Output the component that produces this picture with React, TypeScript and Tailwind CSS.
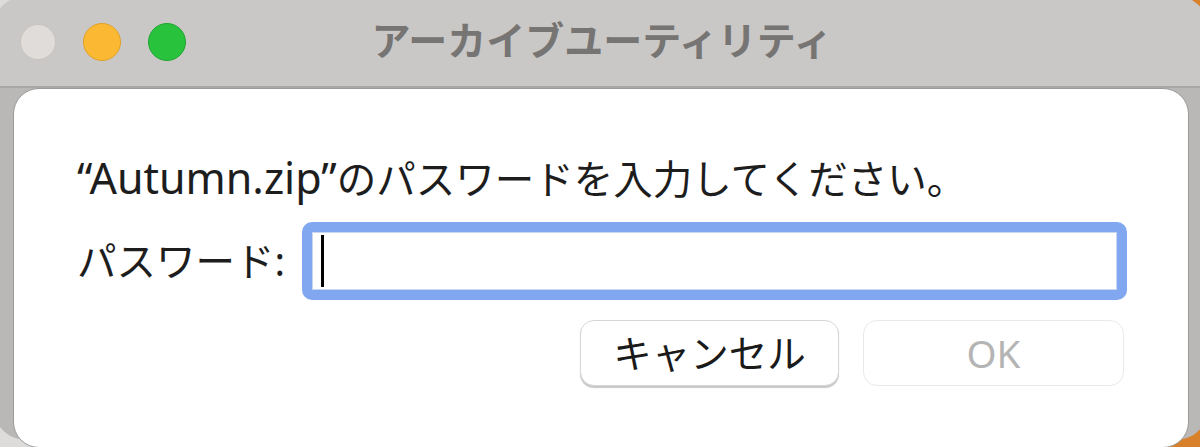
import React from 'react';

const jp = { fontFamily: '"Noto Sans", "Noto Sans CJK JP", sans-serif' };

const TrafficLights: React.FC = () => (
  <div className="flex items-center gap-[27px]">
    <span className="w-[36px] h-[36px] rounded-full bg-[#e0dcd9] border border-[#c9c4c0]" />
    <span className="w-[38px] h-[38px] rounded-full bg-[#fbb933] border border-[#dfa126]" />
    <span className="w-[38px] h-[38px] rounded-full bg-[#28c23d] border border-[#1ea631]" />
  </div>
);

export default function App() {
  return (
    <div
      className="relative w-[1200px] h-[447px] overflow-hidden bg-[linear-gradient(to_right,#dedcda_50%,#d8802a_50%)]"
      style={jp}
    >
      {/* window */}
      <div className="absolute left-[-6px] top-[-4px] w-[1214px] h-[444px] rounded-[32px] bg-[#bab8b6] flex flex-col">
        {/* title bar */}
        <div className="relative h-[92px] shrink-0 rounded-t-[32px] bg-[#cac8c6] border-b-2 border-[#a9a7a5] flex items-center pl-[26px] pt-[2px]">
          <TrafficLights />
          <div className="absolute inset-0 flex items-center justify-center pb-[4px] pl-[2px]">
            <span className="text-[39px] leading-none font-bold text-[#767574]">
              アーカイブユーティリティ
            </span>
          </div>
        </div>

        {/* body */}
        <div className="flex-1 px-[19px]">
          {/* sheet */}
          <div className="h-[360px] rounded-[26px] bg-white border border-[#9d9b99] pl-[63px] pr-[61px] pt-[66px]">
            <p className="text-[39.5px] leading-[46px] text-[#1d1d1d]">
              <span className="text-[43px]">“Autumn.zip”</span>のパスワードを入力してください。
            </p>

            <div className="flex items-center mt-[20px]">
              <span className="w-[225px] shrink-0 text-[39.5px] leading-[46px] text-[#1d1d1d]">パスワード:</span>
              <div className="flex-1 h-[78px] rounded-[10px] border-[10px] border-[#80a7f0] bg-white flex items-center">
                <div className="w-full h-full border border-[#c9d6ef] flex items-center pl-[8px]">
                  <span className="w-[3px] h-[52px] bg-black" />
                </div>
              </div>
            </div>

            <div className="flex justify-end gap-[24px] mt-[20px] pr-[3px]">
              <button className="w-[259px] h-[66px] rounded-[14px] bg-white border border-[#d6d6d6] shadow-[0_2px_1px_rgba(0,0,0,0.22)] text-[38.5px] leading-none text-[#1a1a1a]">
                キャンセル
              </button>
              <button className="w-[261px] h-[66px] rounded-[14px] bg-white border border-[#e9e9e9] text-[38.5px] leading-none text-[#b4b4b4]">
                OK
              </button>
            </div>
          </div>
        </div>
      </div>
    </div>
  );
}
